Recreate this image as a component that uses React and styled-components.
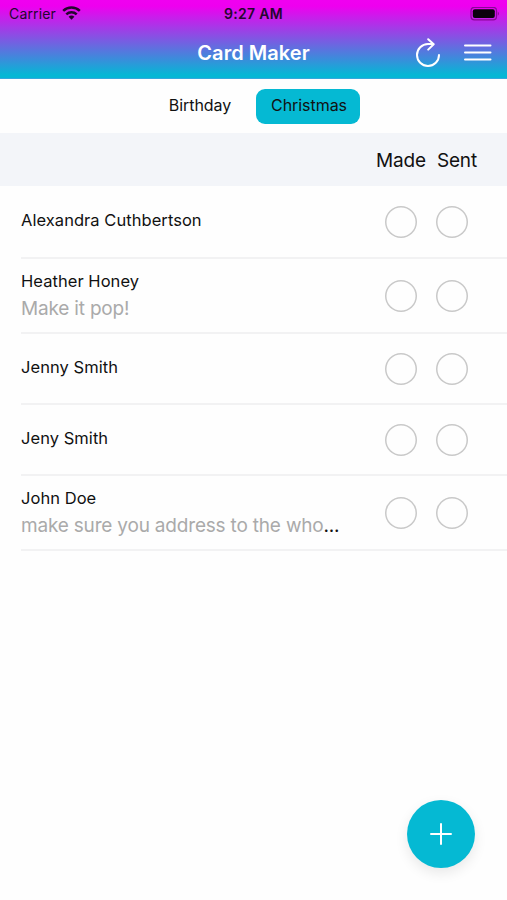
import React, { useState } from 'react';
import styled, { createGlobalStyle } from 'styled-components';

const GlobalStyle = createGlobalStyle`
    * {
        box-sizing: border-box;
    }
    body {
        margin: 0;
        background: #fff;
        color: #111;
        font-family: Inter, "Liberation Sans", sans-serif;
    }
    button {
        font: inherit;
        color: inherit;
        border: 0;
        padding: 0;
        background: none;
        cursor: pointer;
    }
`

const Screen = styled.div`
    position: relative;
    width: 507px;
    height: 900px;
    overflow: hidden;
    background: #fefefe;
`

const Header = styled.header`
    height: 79px;
    background: linear-gradient(#f000f0 0%, #ee00ef 8%, #05b7d5 96%);
    border-bottom: 1px solid #35a8dc;
`

const StatusBar = styled.div`
    display: grid;
    grid-template-columns: 1fr auto 1fr;
    align-items: center;
    height: 27px;
    padding: 0 7px 0 9px;
    color: #24062e;
    font-size: 14px;
`

const Carrier = styled.div`
    display: flex;
    align-items: center;
    gap: 6px;
    letter-spacing: 0.15px;
`

const Clock = styled.div`
    position: relative;
    left: -1px;
    font-weight: 600;
    letter-spacing: 0.3px;
`

const Battery = styled.svg`
    justify-self: end;
`

const NavBar = styled.div`
    display: grid;
    grid-template-columns: 1fr auto 1fr;
    align-items: center;
    height: 51px;
    padding-right: 15px;
    padding-left: 15px;
`

const Title = styled.h1`
    grid-column: 2;
    margin: 0;
    color: #fff;
    font-size: 20px;
    font-weight: 600;
    letter-spacing: 0.05px;
`

const NavActions = styled.div`
    display: flex;
    justify-content: flex-end;
    align-items: center;
    gap: 22px;
`

const IconButton = styled.button`
    display: flex;
`

const Tabs = styled.nav`
    display: flex;
    align-items: center;
    gap: 5px;
    height: 54px;
    padding-left: 147px;
`

const Tab = styled.button`
    height: 35px;
    width: 104px;
    padding-bottom: 2px;
    padding-left: 2px;
    border-radius: 9px;
    font-size: 16px;
    letter-spacing: -0.05px;
    background: ${({ $active }) => ($active ? '#05b9d3' : 'transparent')};
`

const ColumnHeader = styled.div`
    display: flex;
    justify-content: flex-end;
    align-items: center;
    gap: 11px;
    height: 53px;
    padding: 1px 30px 0 0;
    background: #f3f5f9;
    font-size: 19px;
    letter-spacing: -0.15px;
`

const List = styled.ul`
    margin: 0;
    padding: 0 0 0 21px;
    list-style: none;
`

const Row = styled.li`
    display: flex;
    justify-content: space-between;
    align-items: center;
    height: ${({ $height }) => $height}px;
    padding-right: 39px;
    border-bottom: 2px solid #f2f2f3;
`

const Person = styled.div`
    width: 330px;
    padding-bottom: ${({ $hasNote }) => ($hasNote ? '0' : '3px')};
    padding-top: ${({ $hasNote }) => ($hasNote ? '2px' : '0')};
    white-space: nowrap;
`

const Name = styled.div`
    font-size: 16.5px;
    line-height: 24px;
    letter-spacing: 0.05px;
`

const Note = styled.div`
    font-size: 19px;
    line-height: 31px;
    letter-spacing: -0.19px;
    span {
        color: #aaa;
    }
`

const Checks = styled.div`
    display: flex;
    gap: 19px;
`

const Check = styled.button`
    width: 32px;
    height: 32px;
    border-radius: 50%;
    box-shadow: inset 0 0 0 1.5px #c9c9c9;
    background: ${({ $checked }) => ($checked ? '#05b9d3' : 'transparent')};
`

const AddButton = styled.button`
    position: absolute;
    left: 407px;
    top: 800px;
    display: flex;
    align-items: center;
    justify-content: center;
    width: 68px;
    height: 68px;
    border-radius: 50%;
    background: #05b9d3;
    box-shadow: 0 5px 13px rgba(0, 0, 0, 0.09);
`

const cards = [
    { name: 'Alexandra Cuthbertson', height: 73 },
    { name: 'Heather Honey', note: 'Make it pop!', height: 75 },
    { name: 'Jenny Smith', height: 71 },
    { name: 'Jeny Smith', height: 71 },
    { name: 'John Doe', note: 'make sure you address to the who', more: true, height: 75 },
];

function CheckCircle({ label }) {
    const [checked, setChecked] = useState(false);
    return <Check aria-label={label} $checked={checked} onClick={() => setChecked(!checked)} />;
}

function CardRow({ card }) {
    return (
    <Row $height={card.height}>
      <Person $hasNote={!!card.note}>
          <Name>{card.name}</Name>
          {card.note && <Note><span>{card.note}</span>{card.more && '...'}</Note>}
      </Person>
      <Checks>
          <CheckCircle label="Made" />
          <CheckCircle label="Sent" />
      </Checks>
    </Row>
    );
}

function App() {
    const [tab, setTab] = useState('Christmas');
    return (
    <Screen>
      <GlobalStyle />
      <Header>
          <StatusBar>
              <Carrier>
                  Carrier
                  <svg width="19" height="15" viewBox="0 0 19 15" fill="none" stroke="#24062e" strokeWidth="2.5">
                      <path d="M1.2 4.9C5.8 .4 13.2 .4 17.8 4.9" />
                      <path d="M4.3 8.3C7.2 5.5 11.8 5.5 14.7 8.3" />
                      <path d="M9.5 13.7L6.6 10.7C8.2 9.2 10.8 9.2 12.4 10.7Z" fill="#24062e" stroke="none" />
                  </svg>
              </Carrier>
              <Clock>9:27 AM</Clock>
              <Battery width="30" height="14" viewBox="0 0 30 14">
                  <rect x="1" y=".3" width="25.5" height="12.6" rx="3.4" fill="none" stroke="#8a0798" strokeWidth="1.2" />
                  <rect x="2.8" y="2.3" width="22" height="8.8" rx="2" fill="#0b010d" />
                  <path d="M27.8 4.6Q30 6.7 27.8 8.8Z" fill="#8a0798" />
              </Battery>
          </StatusBar>
          <NavBar>
              <Title>Card Maker</Title>
              <NavActions>
                  <IconButton aria-label="Refresh">
                      <svg width="26" height="30" viewBox="0 0 26 30" fill="none" stroke="#fff" strokeWidth="2" strokeLinecap="round" strokeLinejoin="round">
                          <path d="M24 17A11 11 0 1 1 13 6H18" />
                          <path d="M13.2 1.2L18.7 6.3L13.2 11.6" />
                      </svg>
                  </IconButton>
                  <IconButton aria-label="Menu">
                      <svg width="29" height="20" viewBox="0 0 29 20" stroke="#fff" strokeWidth="2" strokeLinecap="round">
                          <path d="M2 2.5H27.5M2 9.5H27.5M2 16.5H27.5" />
                      </svg>
                  </IconButton>
              </NavActions>
          </NavBar>
      </Header>
      <Tabs>
          <Tab $active={tab === 'Birthday'} onClick={() => setTab('Birthday')}>Birthday</Tab>
          <Tab $active={tab === 'Christmas'} onClick={() => setTab('Christmas')}>Christmas</Tab>
      </Tabs>
      <ColumnHeader>
          <span>Made</span>
          <span>Sent</span>
      </ColumnHeader>
      <List>
          {cards.map((card) => <CardRow key={card.name} card={card} />)}
      </List>
      <AddButton aria-label="Add card">
          <svg width="22" height="22" viewBox="0 0 22 22" stroke="#fff" strokeWidth="2" strokeLinecap="round">
              <path d="M11 1V21M1 11H21" />
          </svg>
      </AddButton>
    </Screen>
    );
}

export default App;
